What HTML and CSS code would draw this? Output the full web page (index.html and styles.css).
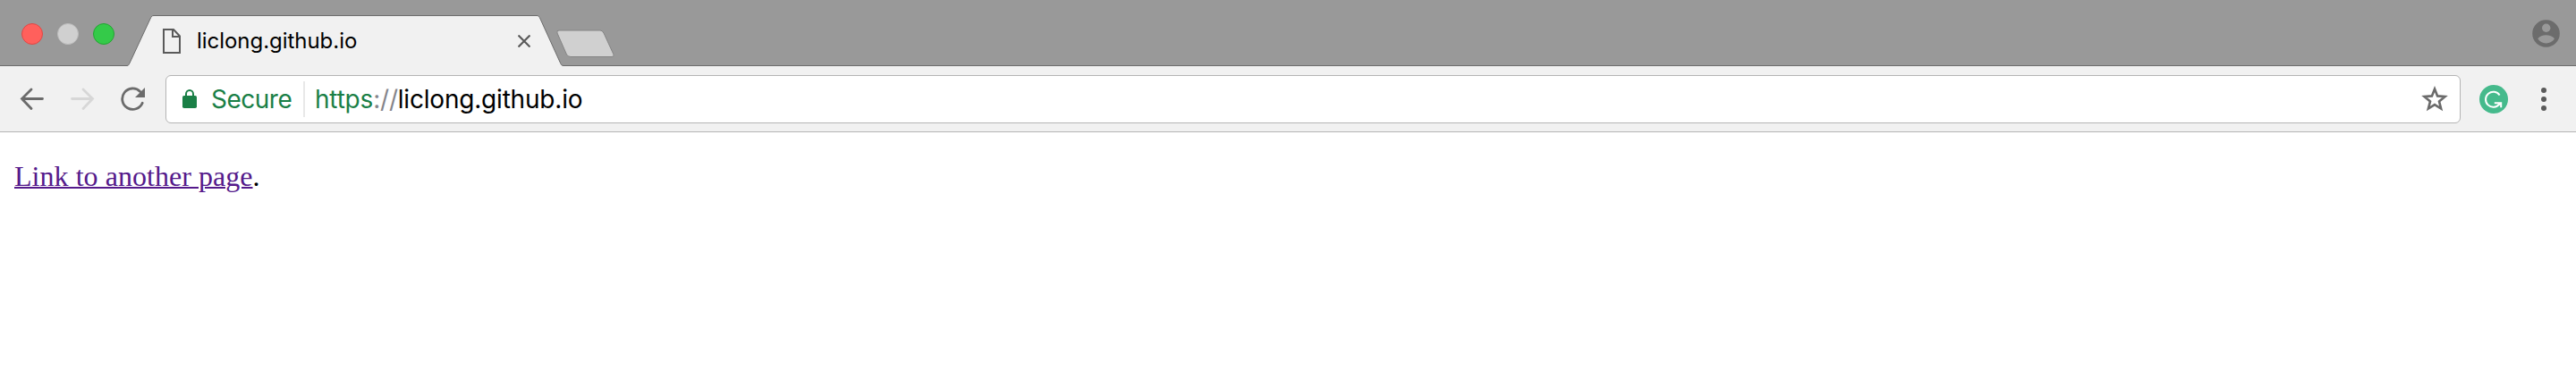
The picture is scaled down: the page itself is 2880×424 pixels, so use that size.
FILE: index.html
```html
<!DOCTYPE html>
<html lang="en">
<head>
<meta charset="utf-8">
<title>liclong.github.io</title>
<link rel="stylesheet" href="styles.css">
</head>
<body>
<header class="tabstrip">
  <div class="lights">
    <span class="light light-close"></span>
    <span class="light light-min"></span>
    <span class="light light-zoom"></span>
  </div>
  <div class="tab">
    <svg class="tab-shape" width="488" height="58" viewBox="0 0 488 58">
      <path d="M0 58V56.500C1.500 56.500 2 55.500 3 53.500L26 4C27.300 1.200 28 .5 30 .5H458C460 .5 460.700 1.200 462 4L484.500 53.500C485.500 55.500 486 56.500 488 56.500V58Z" fill="#f1f1f1"/>
      <path d="M0 56.500C1.500 56.500 2 55.500 3 53.500L26 4C27.300 1.200 28 .5 30 .5H458C460 .5 460.700 1.200 462 4L484.500 53.500C485.500 55.500 486 56.500 488 56.500" fill="none" stroke="#6c6c6c"/>
    </svg>
    <div class="tab-content">
      <svg width="20" height="28" viewBox="0 0 20 28" fill="none" stroke="#5a5a5a" stroke-width="2"><path d="M1 1H12L19 8.500V27H1Z"/><path d="M11 1V9H19"/></svg>
      <span class="tab-title">liclong.github.io</span>
      <svg class="tab-close" width="14" height="14" viewBox="0 0 14 14" stroke="#5a5a5a" stroke-width="2.200"><path d="M.5 .5L13.500 13.500M13.500 .5L.5 13.500"/></svg>
    </div>
  </div>
  <svg class="new-tab" width="66" height="32" viewBox="0 0 66 32"><path d="M3 1H49Q51.500 1 53 4L64 28Q65 30.500 62 30.500H16Q13 30.500 11.500 28L1 4Q0 1 3 1Z" fill="#d0d0d0" stroke="#848484"/></svg>
  <svg class="avatar" width="31" height="31" viewBox="0 0 31 31"><circle cx="15.500" cy="15.500" r="15.300" fill="#6c6c6c"/><circle cx="15.700" cy="9.300" r="4.700" fill="#999"/><path d="M6.300 21.300C8 18.700 12 17.200 15.500 17.200S23 18.700 25 21.300C23 24.600 19.600 26.500 15.500 26.500S8.300 24.600 6.300 21.300Z" fill="#999"/></svg>
</header>
<nav class="toolbar">
  <svg class="back" width="28" height="26" viewBox="0 0 28 26" fill="none" stroke="#6b6b6b" stroke-width="2.800" stroke-linecap="round"><path d="M13 2L2.500 12.500L13 23.500M2.500 12.500H25.500"/></svg>
  <svg class="forward" width="28" height="26" viewBox="0 0 28 26" fill="none" stroke="#d7d7d7" stroke-width="2.800" stroke-linecap="round"><path d="M15 2L25.500 12.500L15 23.500M25.500 12.500H2.500"/></svg>
  <svg class="reload" width="28" height="28" viewBox="0 0 28 28"><path d="M21.700 5.400A11.700 11.700 0 1 0 24.200 18.200" fill="none" stroke="#6b6b6b" stroke-width="2.800" stroke-linecap="round"/><path d="M27 1V12H16Z" fill="#6b6b6b"/></svg>
  <div class="omnibox">
    <svg class="lock" width="16" height="21" viewBox="0 0 16 21"><rect y="7" width="16" height="14" rx="1.800" fill="#1a7f46"/><path d="M4 8V5.200A4 4.200 0 0 1 12 5.200V8" fill="none" stroke="#1a7f46" stroke-width="2"/></svg>
    <span class="secure">Secure</span>
    <span class="divider"></span>
    <span class="url"><span class="scheme">https</span><span class="sep">://</span><span class="host">liclong.github.io</span></span>
    <svg class="star" width="30" height="29" viewBox="0 0 30 29"><path d="M15 3.600L18.100 11.400L26.500 12L20 17.400L22.100 25.500L15 21.100L7.900 25.500L10 17.400L3.500 12L11.900 11.400Z" fill="none" stroke="#6b6b6b" stroke-width="2.600"/></svg>
  </div>
  <svg class="extension" width="32" height="32" viewBox="0 0 32 32"><circle cx="16" cy="16" r="16" fill="#45ba8c"/><path d="M22.600 11.500A8.500 8.500 0 1 0 22.300 21.300" fill="none" stroke="#fff" stroke-width="2"/><path d="M16.800 19.300H25.200V25.200H23.200V22.600L21.500 23L20.800 21.300H16.800Z" fill="#fff"/></svg>
  <svg class="menu" width="6" height="26" viewBox="0 0 6 26" fill="#5a5a5a"><circle cx="3" cy="3" r="3"/><circle cx="3" cy="13" r="3"/><circle cx="3" cy="23" r="3"/></svg>
</nav>
<main class="page"><p class="text"><a class="link" href="#">Link to another page</a>.</p></main>
</body>
</html>
```
FILE: styles.css
```css
* { box-sizing: border-box; }
body { margin: 0; background: #fff; font-family: Inter, "Liberation Sans", sans-serif; }
svg { display: block; flex: none; }

.tabstrip { display: flex; height: 74px; background: #999; box-shadow: inset 0 -1px #6c6c6c; }
.lights { display: flex; flex: none; gap: 16px; width: 142px; padding: 26px 0 0 24px; }
.light { width: 24px; height: 24px; border-radius: 50%; border: 1px solid; }
.light-close { background: #ff605c; border-color: #df4845; }
.light-min { background: #d0d0d0; border-color: #bcbcbc; }
.light-zoom { background: #34ca49; border-color: #23a532; }

.tab { display: grid; flex: none; width: 488px; height: 57px; margin-top: 17px; }
.tab-shape, .tab-content { grid-area: 1 / 1; }
.tab-content { display: flex; align-items: flex-start; padding: 15px 37px 0 40px; }
.tab-title { margin: 0 0 0 18px; font-size: 24px; line-height: 28px; white-space: nowrap; letter-spacing: -0.04px; color: #000; }
.tab-close { margin: 7px 0 0 auto; }
.new-tab { margin: 33px 0 0 -8px; }
.avatar { margin: 22px 18px 0 auto; }

.toolbar { display: flex; align-items: center; height: 74px; padding-left: 22px; background: #f1f1f1; border-bottom: 1px solid #b4b4b4; }
.forward { margin-left: 28px; }
.reload { margin-left: 29px; }
.omnibox { display: flex; align-items: center; flex: 1; height: 54px; margin-left: 22px; padding: 0 13px 0 18px; background: #fff; border: 1px solid #b4b4b4; border-radius: 6px; font-size: 28px; line-height: 36px; white-space: nowrap; }
.secure { width: 103px; margin-left: 16px; color: #1a7f46; letter-spacing: -0.5px; }
.divider { width: 2px; height: 40px; background: #e8e8e8; }
.url { margin-left: 11px; letter-spacing: -0.2px; }
.scheme { color: #1a7f46; }
.sep { color: #85858b; }
.host { color: #000; }
.star { margin-left: auto; }
.extension { margin-left: 21px; }
.menu { margin: 0 33px 0 37px; }

.page { padding: 0 16px; }
.text { margin: 31px 0; font-family: "Liberation Serif", serif; font-size: 32px; line-height: 37px; letter-spacing: 0.04px; color: #000; }
.link { color: #551a8b; text-decoration: underline; text-decoration-thickness: 2px; }
```
